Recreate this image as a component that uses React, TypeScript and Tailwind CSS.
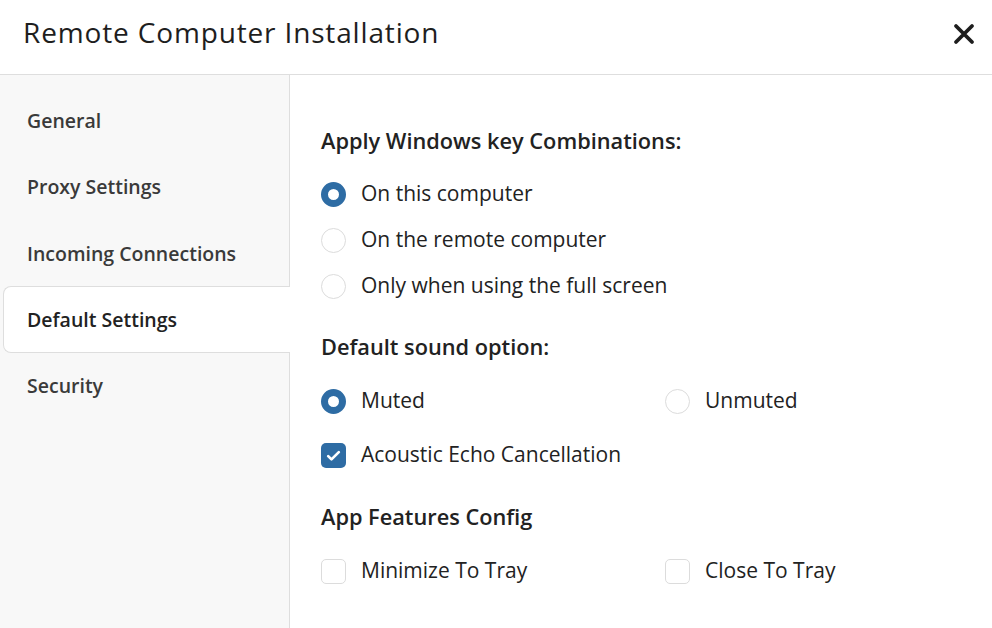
import React from "react";

const Radio = ({ checked }: { checked?: boolean }) =>
  checked ? (
    <span className="box-border block h-[25px] w-[25px] shrink-0 rounded-full border-[7px] border-[#2e6ca4] bg-white" />
  ) : (
    <span className="box-border block h-[25px] w-[25px] shrink-0 rounded-full border-[1.5px] border-[#dcdcdc] bg-white" />
  );

const Check = ({ checked }: { checked?: boolean }) =>
  checked ? (
    <span className="flex h-[25px] w-[25px] shrink-0 items-center justify-center rounded-[5px] bg-[#2e6ca4]">
      <svg width="17" height="17" viewBox="0 0 16 16" fill="none">
        <path d="M3 8.6l3.1 3.1L13 4.8" stroke="white" strokeWidth="2.5" strokeLinecap="round" strokeLinejoin="round" />
      </svg>
    </span>
  ) : (
    <span className="box-border block h-[25px] w-[25px] shrink-0 rounded-[5px] border-[1.5px] border-[#dcdcdc] bg-white" />
  );

const Row = ({ children, label }: { children: React.ReactNode; label: string }) => (
  <div className="flex h-[46px] items-center gap-[15px]">
    {children}
    <span className="text-[21px] text-[#222]">{label}</span>
  </div>
);

const items = ["General", "Proxy Settings", "Incoming Connections", "Default Settings", "Security"];

export default function App() {
  return (
    <div className="flex h-[628px] w-[992px] flex-col overflow-hidden bg-white" style={{ fontFamily: '"Open Sans", sans-serif' }}>
      <div className="flex h-[75px] shrink-0 items-center justify-between border-b border-[#dedede] pb-[10px] pl-[23px] pr-[16px]">
        <h1 className="text-[28px] font-medium tracking-[0.85px] text-[#1e1e1e]">Remote Computer Installation</h1>
        <svg width="24" height="24" viewBox="0 0 24 24" fill="none" className="mt-[4px]">
          <path d="M4 4L20 20M20 4L4 20" stroke="#1e1e1e" strokeWidth="3.8" strokeLinecap="round" />
        </svg>
      </div>
      <div className="flex flex-1">
        <div className="flex w-[290px] shrink-0 flex-col border-r border-[#dedede] bg-[#f8f8f8] pl-[3px] pt-[12.5px]">
          {items.map((it) =>
            it === "Default Settings" ? (
              <div key={it} className="-mr-px flex h-[66.25px] items-center rounded-l-[8px] border border-r-0 border-[#dedede] bg-white pl-[23px] text-[19.5px] font-semibold text-[#222]">
                {it}
              </div>
            ) : (
              <div key={it} className="flex h-[66.25px] items-center pl-[24px] text-[19.5px] font-semibold text-[#3a3a3a]">
                {it}
              </div>
            )
          )}
        </div>
        <div className="flex flex-1 flex-col pl-[31px] pt-[52px]">
          <h2 className="h-[28px] text-[21.75px] font-semibold leading-[28px] text-[#222]">Apply Windows key Combinations:</h2>
          <div className="mt-[16px]">
            <Row label="On this computer"><Radio checked /></Row>
            <Row label="On the remote computer"><Radio /></Row>
            <Row label="Only when using the full screen"><Radio /></Row>
          </div>
          <h2 className="mt-[24px] h-[28px] text-[21.75px] font-semibold leading-[28px] text-[#222]">Default sound option:</h2>
          <div className="mt-[17px] grid grid-cols-[344px_1fr]">
            <Row label="Muted"><Radio checked /></Row>
            <Row label="Unmuted"><Radio /></Row>
          </div>
          <div className="mt-[8px]">
            <Row label="Acoustic Echo Cancellation"><Check checked /></Row>
          </div>
          <h2 className="mt-[25px] h-[28px] text-[21.75px] font-semibold leading-[28px] text-[#222]">App Features Config</h2>
          <div className="mt-[17px] grid grid-cols-[344px_1fr]">
            <Row label="Minimize To Tray"><Check /></Row>
            <Row label="Close To Tray"><Check /></Row>
          </div>
        </div>
      </div>
    </div>
  );
}
